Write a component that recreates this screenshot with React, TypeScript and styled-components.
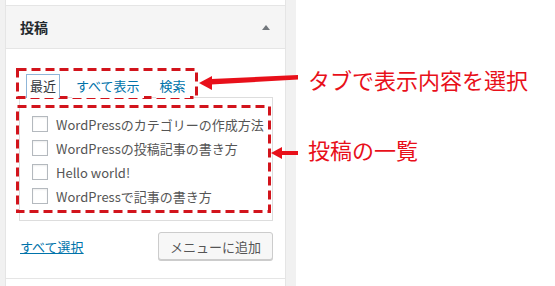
import React from 'react';
import styled, { createGlobalStyle } from 'styled-components';

const GlobalStyle = createGlobalStyle`
    html, body {
        margin: 0;
        padding: 0;
        background: #fff;
    }
    body {
        font-family: "Noto Sans CJK JP", "Noto Sans", sans-serif;
        font-size: 13px;
        color: #444;
    }
`;

const Page = styled.div`
    position: relative;
    display: grid;
    grid-template-columns: 5px 281px 10px 1fr;
    width: 555px;
    height: 286px;
    overflow: hidden;
`;

const Gutter = styled.div`
    background: #f1f1f1;
`;

const Panel = styled.div`
    display: flex;
    flex-direction: column;
    background: #fff;
    border-left: 1px solid #e5e5e5;
    border-right: 1px solid #e5e5e5;
`;

const PrevSection = styled.div`
    height: 5px;
    border-bottom: 1px solid #e5e5e5;
`;

const Header = styled.div`
    display: flex;
    align-items: center;
    justify-content: space-between;
    height: 42px;
    padding: 0 15px 0 14px;
    background: #f5f5f5;
    border-bottom: 1px solid #e5e5e5;
`;

const Title = styled.h3`
    margin: 0;
    font-size: 14px;
    font-weight: 700;
    color: #23282d;
`;

const Body = styled.div`
    padding: 25px 12px 0 13px;
    border-bottom: 1px solid #e5e5e5;
    height: 230px;
    box-sizing: border-box;
`;

const Tabs = styled.ul`
    display: flex;
    gap: 12px;
    margin: 0 0 0 7px;
    padding: 0;
    list-style: none;
`;

const Tab = styled.li<{ $active?: boolean }>`
    position: relative;
    height: 24px;
    line-height: 22px;
    padding: 0 3px;
    font-size: 13px;
    box-sizing: border-box;
    color: ${(p) => (p.$active ? '#32373c' : '#0073aa')};
    border: 1px solid ${(p) => (p.$active ? '#8fb6d9' : 'transparent')};
    border-bottom: none;
    background: #fff;
    margin-bottom: -1px;
    z-index: 1;
`;

const TabPanel = styled.div`
    border: 1px solid #dddddd;
    padding: 14px 12px 12px;
`;

const Row = styled.label`
    display: flex;
    align-items: center;
    gap: 8px;
    height: 24px;
    color: #555;
    font-size: 13px;
    white-space: nowrap;
`;

const Check = styled.span`
    width: 16px;
    height: 16px;
    box-sizing: border-box;
    border: 1px solid #b4b9be;
    background: #fff;
    box-shadow: inset 0 1px 2px rgba(0, 0, 0, 0.07);
    flex-shrink: 0;
`;

const Footer = styled.div`
    display: flex;
    align-items: center;
    justify-content: space-between;
    padding: 11px 0 0 1px;
`;

const SelectAll = styled.a`
    color: #0073aa;
    text-decoration: underline;
    font-size: 13px;
`;

const Button = styled.button`
    height: 28px;
    padding: 0 11px;
    font-family: inherit;
    font-size: 13px;
    color: #555;
    background: #f7f7f7;
    border: 1px solid #cccccc;
    border-radius: 3px;
    box-shadow: 0 1px 0 #cccccc;
`;

const Callouts = styled.div`
    display: flex;
    flex-direction: column;
    padding: 64px 0 0 12px;
`;

const Label = styled.div<{ $gap?: number }>`
    margin-top: ${(p) => p.$gap ?? 0}px;
    font-size: 22px;
    line-height: 30px;
    color: #e8101a;
    white-space: nowrap;
`;

const Overlay = styled.svg`
    position: absolute;
    left: 0;
    top: 0;
    pointer-events: none;
`;

const posts = [
    'WordPressのカテゴリーの作成方法',
    'WordPressの投稿記事の書き方',
    'Hello world!',
    'WordPressで記事の書き方',
];

const App = () => {
    return (
        <>
            <GlobalStyle />
            <Page>
                <Gutter />
                <Panel>
                    <PrevSection />
                    <Header>
                        <Title>投稿</Title>
                        <svg width="8" height="5" viewBox="0 0 8 5">
                            <polygon points="4,0 8,5 0,5" fill="#72777c" />
                        </svg>
                    </Header>
                    <Body>
                        <Tabs>
                            <Tab $active>最近</Tab>
                            <Tab>すべて表示</Tab>
                            <Tab>検索</Tab>
                        </Tabs>
                        <TabPanel>
                            {posts.map((title) => (
                                <Row key={title}>
                                    <Check />
                                    {title}
                                </Row>
                            ))}
                        </TabPanel>
                        <Footer>
                            <SelectAll href="#">すべて選択</SelectAll>
                            <Button>メニューに追加</Button>
                        </Footer>
                    </Body>
                </Panel>
                <Gutter />
                <Callouts>
                    <Label>タブで表示内容を選択</Label>
                    <Label $gap={40}>投稿の一覧</Label>
                </Callouts>

                {/* annotations drawn over the panel */}
                <Overlay width="555" height="286">
                    <g fill="none" stroke="#d2141c" strokeWidth="3" strokeDasharray="9 5">
                        <rect x="17.5" y="69.5" width="179" height="28" />
                        <rect x="17.5" y="106.5" width="252" height="105" />
                    </g>
                    <g fill="#e8101a">
                        <polygon points="211,79 298,75 298,79.5 211,84.5" />
                        <polygon points="199,83 212,76 212,90" />
                        <rect x="280" y="151" width="18" height="4" />
                        <polygon points="271,153 282,147 282,159" />
                    </g>
                </Overlay>
            </Page>
        </>
    );
};

export default App;
